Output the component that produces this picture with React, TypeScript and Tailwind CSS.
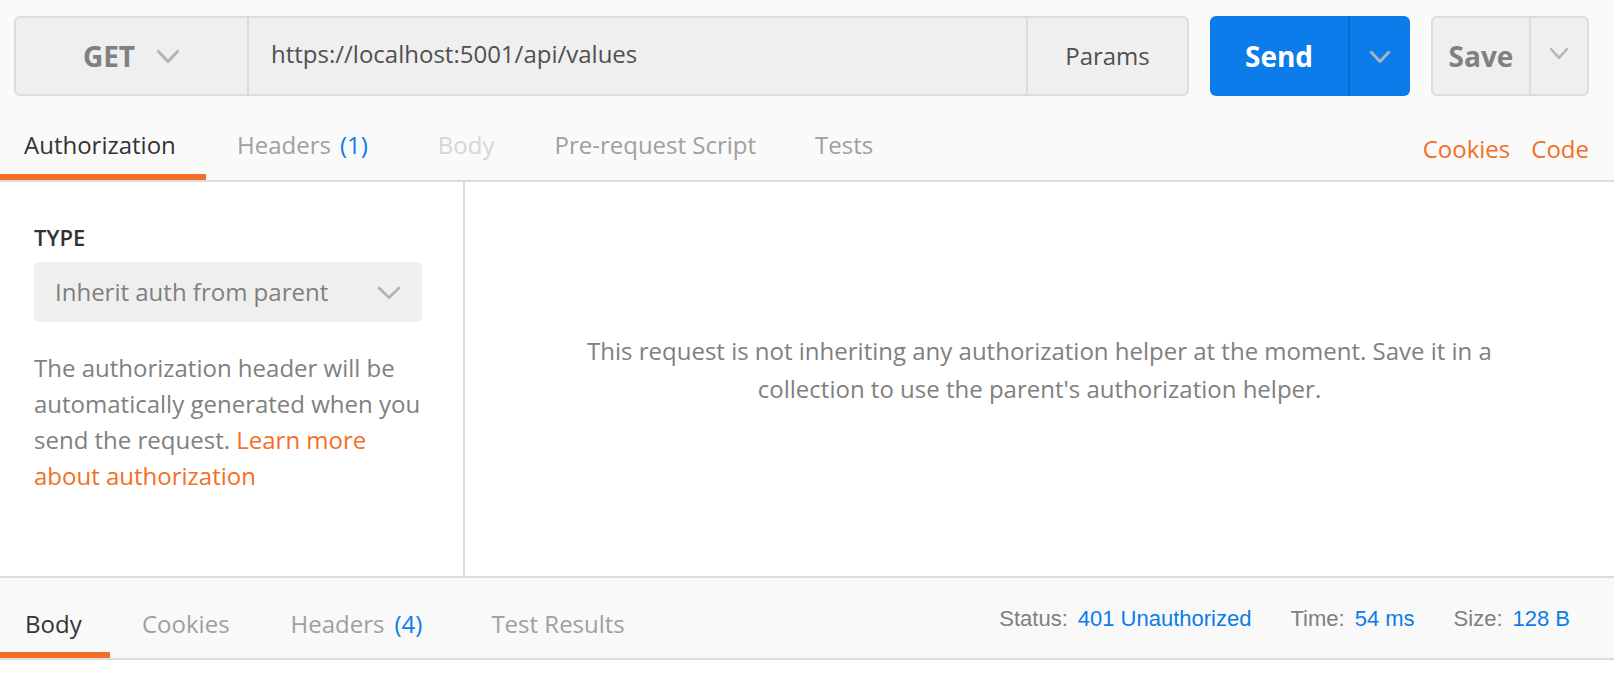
function Chevron({ w, h, color, sw }: { w: number; h: number; color: string; sw: number }) {
  return (
    <svg width={w} height={h} viewBox={`0 0 ${w} ${h}`} fill="none">
      <polyline
        points={`${sw / 2},${sw / 2} ${w / 2},${h - sw / 2} ${w - sw / 2},${sw / 2}`}
        stroke={color}
        strokeWidth={sw}
      />
    </svg>
  );
}

export default function App() {
  const orange = "text-[#f26f25]";

  return (
    <div className="w-[1614px] h-[674px] bg-white font-['Open_Sans',sans-serif] text-[24px] overflow-hidden">
      {/* request bar */}
      <div className="bg-[#fafafa]">
        <div className="flex gap-[21px] pl-[14px] pr-[25px] pt-[16px]">
          <div className="flex flex-1 h-[80px] rounded-[6px] border-2 border-[#dcdcdc] bg-[#efefef] overflow-hidden">
            <div className="flex w-[233px] items-center justify-center gap-[21px] border-r-2 border-[#dcdcdc]">
              <span className="text-[28px] font-bold text-[#808080]">GET</span>
              <Chevron w={24} h={14} color="#b5b5b5" sw={3} />
            </div>
            <div className="flex flex-1 items-center pl-[22px] pb-[4px] text-[#505050]">
              https://localhost:5001/api/values
            </div>
            <div className="flex w-[161px] items-center justify-center border-l-2 border-[#dcdcdc] text-[#505050]">
              Params
            </div>
          </div>
          <div className="flex h-[80px] w-[200px] rounded-[6px] bg-[#0b7cea] overflow-hidden">
            <div className="flex w-[138px] items-center justify-center text-[28px] font-bold text-white">Send</div>
            <div className="flex flex-1 items-center justify-center border-l-2 border-[#0a6cc9]">
              <Chevron w={22} h={13} color="#aab3bd" sw={3} />
            </div>
          </div>
          <div className="flex h-[80px] w-[158px] rounded-[6px] border-2 border-[#dcdcdc] bg-[#efefef] overflow-hidden">
            <div className="flex w-[98px] items-center justify-center border-r-2 border-[#dcdcdc] text-[28px] font-bold text-[#808080]">
              Save
            </div>
            <div className="flex flex-1 items-center justify-center pb-[6px]">
              <Chevron w={20} h={12} color="#b5b5b5" sw={2.5} />
            </div>
          </div>
        </div>

        {/* request tabs */}
        <div className="flex h-[86px] items-end border-b-2 border-[#dcdcdc] leading-[36px]">
          <div className="w-[206px] pl-[24px] pb-[11px] border-b-[6px] border-[#f26f25] text-[#333]">Authorization</div>
          <div className="ml-[31px] pb-[11px] border-b-[6px] border-transparent text-[#a0a0a0]">
            Headers<span className="ml-[9px] text-[#0b7cea]">(1)</span>
          </div>
          <div className="ml-[70px] pb-[11px] border-b-[6px] border-transparent text-[#d6d6d6]">Body</div>
          <div className="ml-[60px] pb-[11px] border-b-[6px] border-transparent text-[#a0a0a0]">Pre-request Script</div>
          <div className="ml-[59px] pb-[11px] border-b-[6px] border-transparent text-[#a0a0a0]">Tests</div>
          <div className={`ml-auto flex gap-[21px] pr-[25px] pb-[13px] ${orange}`}>
            <span>Cookies</span>
            <span>Code</span>
          </div>
        </div>
      </div>

      {/* auth content */}
      <div className="flex h-[394px] bg-white">
        <div className="w-[465px] border-r-2 border-[#dcdcdc] px-[34px] pt-[40px]">
          <div className="text-[22px] leading-[30px] font-semibold text-[#333]">TYPE</div>
          <div className="mt-[10px] flex h-[60px] w-[388px] items-center justify-between rounded-[5px] bg-[#efefef] pl-[21px] pr-[21px] text-[#808080]">
            <span>Inherit auth from parent</span>
            <Chevron w={24} h={13} color="#b0b0b0" sw={2.5} />
          </div>
          <p className="mt-[28px] leading-[36px] text-[#808080]">
            The authorization header will be automatically generated when you send the request.{" "}
            <span className={orange}>Learn more about authorization</span>
          </p>
        </div>
        <div className="flex-1 pt-[150px]">
          <p className="mx-auto max-w-[960px] text-center leading-[38px] text-[#808080]">
            This request is not inheriting any authorization helper at the moment. Save it in a collection to use the
            parent's authorization helper.
          </p>
        </div>
      </div>

      {/* response bar */}
      <div className="flex h-[84px] items-end border-y-2 border-[#dcdcdc] bg-[#f9f9f9] leading-[36px]">
        <div className="w-[110px] pl-[25px] pb-[10px] border-b-[6px] border-[#f26f25] text-[#333]">Body</div>
        <div className="ml-[32px] pb-[10px] border-b-[6px] border-transparent text-[#a0a0a0]">Cookies</div>
        <div className="ml-[61px] pb-[10px] border-b-[6px] border-transparent text-[#a0a0a0]">
          Headers<span className="ml-[10px] text-[#0b7cea]">(4)</span>
        </div>
        <div className="ml-[69px] pb-[10px] border-b-[6px] border-transparent text-[#a0a0a0]">Test Results</div>
        <div className="ml-auto flex gap-[39px] self-center pr-[44px] pt-[2px] font-['Liberation_Sans',Arial,sans-serif] text-[22px] leading-[30px]">
          <div className="flex gap-[10px]">
            <span className="text-[#808080]">Status:</span>
            <span className="text-[#0b7cea]">401 Unauthorized</span>
          </div>
          <div className="flex gap-[10px]">
            <span className="text-[#808080]">Time:</span>
            <span className="text-[#0b7cea]">54 ms</span>
          </div>
          <div className="flex gap-[10px]">
            <span className="text-[#808080]">Size:</span>
            <span className="text-[#0b7cea]">128 B</span>
          </div>
        </div>
      </div>
    </div>
  );
}
